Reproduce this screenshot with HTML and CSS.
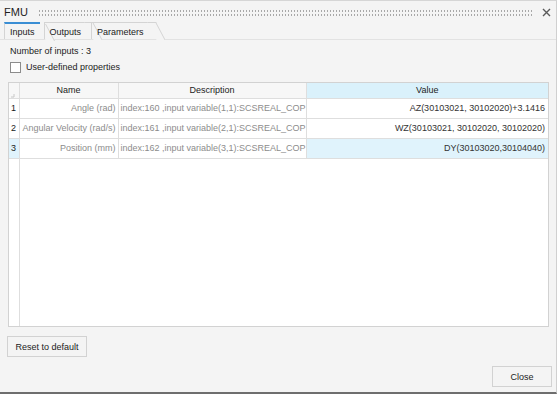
FILE: index.html
```html
<!DOCTYPE html>
<html>
  <head>
    <meta name='viewport' content='width=device-width, initial-scale=1'>
    <title>FMU</title>
    <link rel="stylesheet" href="styles.css">
  </head>
<body>
<div class='window'>

  <div class='titlebar'>
    <span class='title'>FMU</span>
    <span class='grip'></span>
    <svg class='close_x' width='9' height='9' viewBox='0 0 9 9'>
      <path d='M1 1 L8 8 M8 1 L1 8' stroke='#5a5a5a' stroke-width='1.4' fill='none'/>
    </svg>
  </div>

  <div class='tabs'>
    <div class='tab active'>Inputs</div>
    <div class='tab'>Outputs</div>
    <div class='tab'>Parameters</div>
  </div>

  <div class='panel'>
    <div class='count'>Number of inputs : 3</div>
    <label class='check_row'><span class='checkbox'></span>User-defined properties</label>

    <div class='grid_box'>
      <table class='grid'>
        <colgroup>
          <col style='width:10px'>
          <col style='width:99px'>
          <col style='width:188px'>
          <col>
        </colgroup>
        <tr class='head'>
          <th class='corner'><svg width='5' height='5' viewBox='0 0 5 5'><path d='M4 1 L4 4 L1 4' stroke='#c8c8c8' fill='none'/></svg></th>
          <th>Name</th>
          <th>Description</th>
          <th class='sel_col'>Value</th>
        </tr>
        <tr class='row'>
          <td class='num'>1</td>
          <td class='name'>Angle (rad)</td>
          <td class='desc'>index:160 ,input variable(1,1):SCSREAL_COP</td>
          <td class='value'>AZ(30103021, 30102020)+3.1416</td>
        </tr>
        <tr class='row'>
          <td class='num'>2</td>
          <td class='name'>Angular Velocity (rad/s)</td>
          <td class='desc'>index:161 ,input variable(2,1):SCSREAL_COP</td>
          <td class='value'>WZ(30103021, 30102020, 30102020)</td>
        </tr>
        <tr class='row current'>
          <td class='num'>3</td>
          <td class='name'>Position (mm)</td>
          <td class='desc'>index:162 ,input variable(3,1):SCSREAL_COP</td>
          <td class='value'>DY(30103020,30104040)</td>
        </tr>
        <tr class='filler'>
          <td class='num'></td><td></td><td></td><td></td>
        </tr>
      </table>
    </div>

    <button class='btn reset'>Reset to default</button>
  </div>

  <div class='footer'>
    <button class='btn close'>Close</button>
  </div>

</div>
</body>
</html>
```

FILE: styles.css
```css
* {font-family: "Liberation Sans", Arial, sans-serif; box-sizing: border-box;}

body {margin: 0; background-color: #f4f4f4; font-size: 9px; color: #222;}

.window {width: 557px; height: 394px; border-top: 1px solid #d6d6d6; border-bottom: 2px solid #6e6e6e; border-right: 1px solid #d0d0d0; display: flex; flex-direction: column;}

/* title bar with the dotted drag handle */
.titlebar {height: 21px; display: flex; align-items: center; padding: 0 5px 0 4px;}
.title {font-size: 11px; color: #1e1e1e; padding-top: 1px;}
.grip {flex: 1; height: 7px; margin: 1px 8px 0 10px;
  background-image: radial-gradient(circle, #a8a8a8 0.7px, transparent 1.1px);
  background-size: 3px 4px;}
.close_x {display: block; margin-top: 1px;}

/* tabs */
.tabs {height: 18px; display: flex; padding-left: 4px; border-bottom: 1px solid #e2e2e2; gap: 4px;}
.tab {position: relative; height: 17px; line-height: 18px; padding: 0 6px 0 5px; border-left: 1px solid #d4d4d4; border-top: 1px solid #d4d4d4; color: #222; font-size: 9px;}
.tab::after {content: ''; position: absolute; top: -1px; right: -6px; width: 8px; height: 17px; border-top: 1px solid #d4d4d4; border-right: 1px solid #d4d4d4; transform: skewX(28deg); transform-origin: top left; background: #f4f4f4;}
.tab.active {border-top: 2px solid #3a8ed4; line-height: 16px; padding-right: 5px;}
.tab.active::after {border-top: none; top: 0;}

.panel {padding: 6px 0 0 8px; flex: 1; display: flex; flex-direction: column; align-items: flex-start;}
.count {padding-left: 2px; line-height: 11px;}
.check_row {display: flex; align-items: center; margin: 5px 0 0 2px; line-height: 11px;}
.checkbox {width: 11px; height: 11px; border: 1px solid #8c8c8c; background: white; margin-right: 5px;}

/* the inputs grid */
.grid_box {margin-top: 9px; width: 541px; height: 245px; border: 1px solid #d2d2d2; background: white;}
.grid {border-collapse: collapse; width: 100%; height: 100%; table-layout: fixed;}
.grid td, .grid th {border: 1px solid #dedede; padding: 0; white-space: nowrap; overflow: hidden; font-size: 9px;}
.grid tr:first-child th {border-top: none;}
.grid tr td:first-child, .grid tr th:first-child {border-left: none;}
.grid tr td:last-child, .grid tr th:last-child {border-right: none;}
.head {height: 15px;}
.head th {font-weight: normal; background: #f7f7f7; color: #222; text-align: center;}
.head th.corner {text-align: left; vertical-align: bottom; padding-left: 1px; line-height: 6px;}
.head th.sel_col {background: #daf1fb;}
.row {height: 20px;}
.num {padding-left: 2px !important; color: #1a1a1a;}
.name {text-align: right; padding-right: 2px !important; color: #8c8c8c;}
.desc {padding-left: 2px !important; color: #8c8c8c;}
.value {text-align: right; padding-right: 3px !important; color: #333;}
.row.current .num, .row.current .value {background: #e0f3fc;}
.grid .filler td {border: none;}
.grid .filler td.num {border-right: 1px solid #dedede;}

.btn {font-family: "Liberation Sans", Arial, sans-serif; font-size: 9px; color: #222; background: #f4f4f4; border: 1px solid #d2d2d2; height: 21px; border-radius: 0;}
.reset {margin: 9px 0 0 -1px; width: 80px;}
.footer {display: flex; justify-content: flex-end; padding: 0 4px 5px 0;}
.close {width: 60px;}
```
